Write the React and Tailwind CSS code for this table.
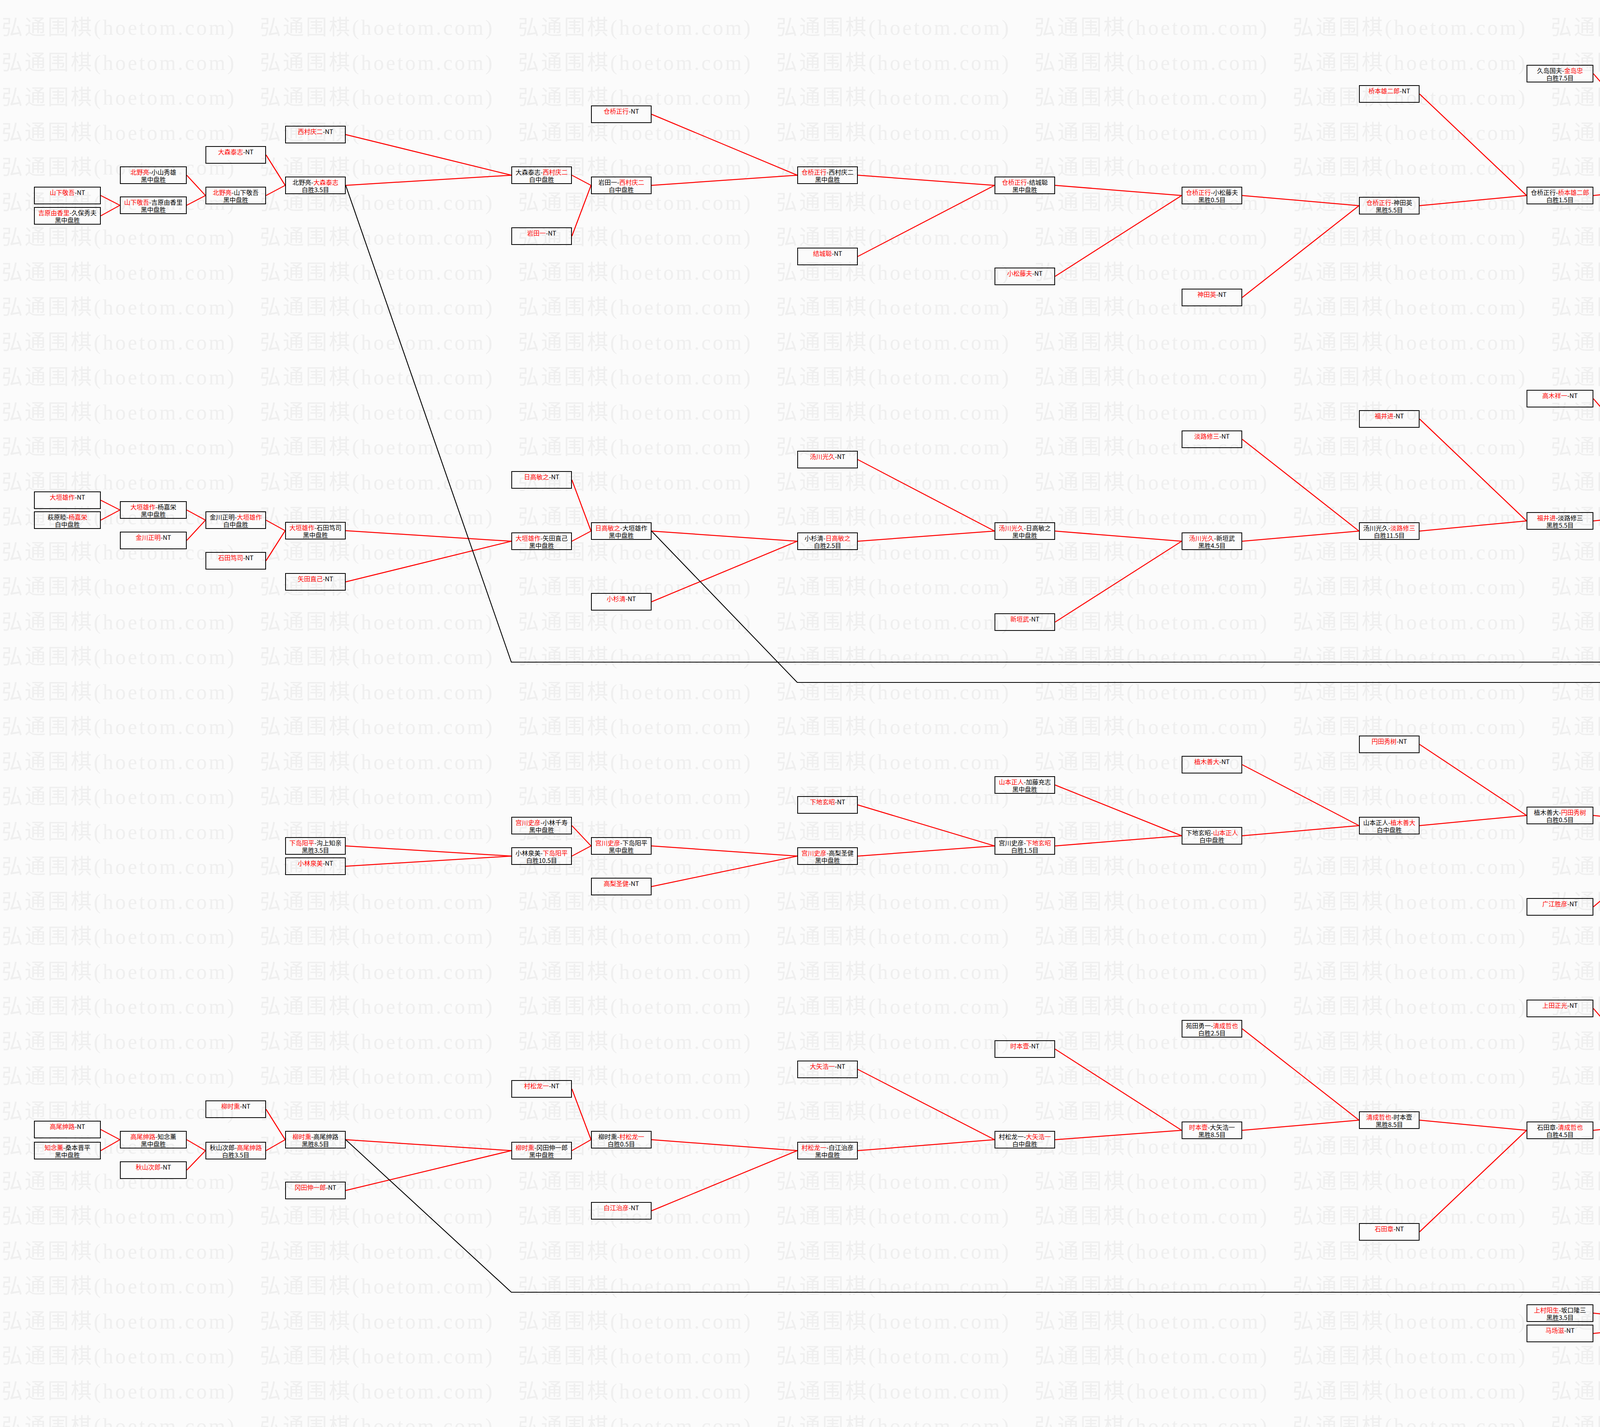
import React from 'react';

// column x / width on the bracket canvas
const COLS = [
  [87, 171], [307, 171], [526, 155], [730, 155], [1309, 155], [1513, 155],
  [2041, 155], [2546, 155], [3025, 155], [3479, 155], [3908, 171], [4327, 155],
  [4707, 155], [5061, 155], [5390, 155], [5694, 155], [5973, 171], [6193, 155],
  [6396, 171],
];

const BOX_H = 45;

// [id, col, top, first line (*red*), second line]
const NODES = [
  // upper half
  ['a1', 0, 478, '*山下敬吾*-NT'],
  ['a2', 0, 530, '*吉原由香里*-久保秀夫', '黑中盘胜'],
  ['a3', 1, 426, '*北野亮*-小山秀雄', '黑中盘胜'],
  ['a4', 1, 503, '*山下敬吾*-吉原由香里', '黑中盘胜'],
  ['a5', 2, 374, '*大森泰志*-NT'],
  ['a6', 2, 478, '*北野亮*-山下敬吾', '黑中盘胜'],
  ['a7', 3, 322, '*西村庆二*-NT'],
  ['a8', 3, 452, '北野亮-*大森泰志*', '白胜3.5目'],
  ['a9', 4, 426, '大森泰志-*西村庆二*', '白中盘胜'],
  ['a10', 4, 582, '*岩田一*-NT'],
  ['a11', 5, 270, '*仓桥正行*-NT'],
  ['a12', 5, 452, '岩田一-*西村庆二*', '白中盘胜'],
  ['a13', 6, 426, '*仓桥正行*-西村庆二', '黑中盘胜'],
  ['a14', 6, 634, '*结城聪*-NT'],
  ['a15', 7, 452, '*仓桥正行*-结城聪', '黑中盘胜'],
  ['a16', 7, 685, '*小松藤夫*-NT'],
  ['a17', 8, 478, '*仓桥正行*-小松藤夫', '黑胜0.5目'],
  ['a18', 8, 739, '*神田英*-NT'],
  ['a19', 9, 218, '*桥本雄二郎*-NT'],
  ['a20', 9, 504, '*仓桥正行*-神田英', '黑胜5.5目'],
  ['a21', 10, 166, '久岛国夫-*金岛忠*', '白胜7.5目'],
  ['a22', 10, 478, '仓桥正行-*桥本雄二郎*', '白胜1.5目'],
  ['a23', 11, 114, '黑泽忠尚-*本田邦久*', '白胜0.5目'],
  ['a24', 11, 452, '桥本雄二郎-*金岛忠*', '白胜1.5目'],
  ['a25', 12, 426, '*本田邦久*-金岛忠', '黑中盘胜'],
  ['a26', 12, 790, '*桥本昌二*-NT'],
  ['a27', 13, 63, '*小林觉*-NT'],
  ['a28', 13, 452, '桥本昌二-*本田邦久*', '白胜11.5目'],
  ['a29', 14, 10, '*山田规三生*-NT'],
  ['a30', 14, 426, '*小林觉*-本田邦久', '黑胜11.5目'],
  ['a31', 15, 400, '*山田规三生*-小林觉', '黑胜4.5目'],

  ['b1', 0, 1258, '*大垣雄作*-NT'],
  ['b2', 0, 1309, '萩原睦-*杨嘉栄*', '白中盘胜'],
  ['b3', 1, 1283, '*大垣雄作*-杨嘉栄', '黑中盘胜'],
  ['b4', 1, 1361, '*金川正明*-NT'],
  ['b5', 2, 1309, '金川正明-*大垣雄作*', '白中盘胜'],
  ['b6', 2, 1413, '*石田笃司*-NT'],
  ['b7', 3, 1336, '*大垣雄作*-石田笃司', '黑中盘胜'],
  ['b8', 3, 1467, '*矢田直己*-NT'],
  ['b9', 4, 1206, '*日高敏之*-NT'],
  ['b10', 4, 1363, '*大垣雄作*-矢田直己', '黑中盘胜'],
  ['b11', 5, 1337, '*日高敏之*-大垣雄作', '黑中盘胜'],
  ['b12', 5, 1518, '*小杉清*-NT'],
  ['b13', 6, 1154, '*汤川光久*-NT'],
  ['b14', 6, 1363, '小杉清-*日高敏之*', '白胜2.5目'],
  ['b15', 7, 1337, '*汤川光久*-日高敏之', '黑中盘胜'],
  ['b16', 7, 1570, '*新垣武*-NT'],
  ['b17', 8, 1102, '*淡路修三*-NT'],
  ['b18', 8, 1363, '*汤川光久*-新垣武', '黑胜4.5目'],
  ['b19', 9, 1050, '*福井进*-NT'],
  ['b20', 9, 1337, '汤川光久-*淡路修三*', '白胜11.5目'],
  ['b21', 10, 998, '*高木祥一*-NT'],
  ['b22', 10, 1311, '*福井进*-淡路修三', '黑胜5.5目'],
  ['b23', 11, 946, '宫本义久-*石榑郁郎*', '白胜7.5目'],
  ['b24', 11, 1285, '*高木祥一*-福井进', '黑中盘胜'],
  ['b25', 12, 894, '*杉内雅男*-NT'],
  ['b26', 12, 1259, '*石榑郁郎*-高木祥一', '黑胜1.5目'],
  ['b27', 13, 842, '*小林光一*-NT'],
  ['b28', 13, 1233, '石榑郁郎-*杉内雅男*', '白胜1.5目'],
  ['b29', 14, 1207, '杉内雅男-*小林光一*', '白中盘胜'],
  ['b30', 14, 1622, '*赵治勋*-NT'],
  ['b31', 15, 1233, '赵治勋-*小林光一*', '白中盘胜'],

  ['c1', 16, 816, '小林光一-*山田规三生*', '白胜2.5目'],
  ['c2', 17, 868, '北野亮-*山田规三生*', '白中盘胜'],
  ['c3', 16, 1700, '*北野亮*-大垣雄作', '黑胜0.5目'],
  ['c4', 18, 1804, '森田道博-*山田规三生*', '白中盘胜'],
  ['c5', 14, 1778, '*上村阳生*-王铭琬', '黑胜0.5目'],

  // lower half
  ['d1', 3, 2143, '*下岛阳平*-沟上知亲', '黑胜3.5目'],
  ['d2', 3, 2195, '*小林泉美*-NT'],
  ['d3', 4, 2091, '*宫川史彦*-小林千寿', '黑中盘胜'],
  ['d4', 4, 2169, '小林泉美-*下岛阳平*', '白胜10.5目'],
  ['d5', 5, 2143, '*宫川史彦*-下岛阳平', '黑中盘胜'],
  ['d6', 5, 2247, '*高梨圣健*-NT'],
  ['d7', 6, 2038, '*下地玄昭*-NT'],
  ['d8', 6, 2169, '*宫川史彦*-高梨圣健', '黑中盘胜'],
  ['d9', 7, 1987, '*山本正人*-加藤充志', '黑中盘胜'],
  ['d10', 7, 2143, '宫川史彦-*下地玄昭*', '白胜1.5目'],
  ['d11', 8, 1935, '*植木善大*-NT'],
  ['d12', 8, 2117, '下地玄昭-*山本正人*', '白中盘胜'],
  ['d13', 9, 1883, '*円田秀树*-NT'],
  ['d14', 9, 2091, '山本正人-*植木善大*', '白中盘胜'],
  ['d15', 10, 2065, '植木善大-*円田秀树*', '白胜0.5目'],
  ['d16', 10, 2299, '*广江胜彦*-NT'],
  ['d17', 11, 1831, '*森田道博*-NT'],
  ['d18', 11, 2091, '广江胜彦-*円田秀树*', '白中盘胜'],
  ['d19', 12, 2065, '*森田道博*-円田秀树', '黑中盘胜'],
  ['d20', 12, 2351, '*大渊盛人*-NT'],
  ['d21', 13, 2091, '*森田道博*-大渊盛人', '黑中盘胜'],
  ['d22', 13, 2403, '*郡寿男*-NT'],
  ['d23', 13, 2455, '*加藤正夫*-NT'],
  ['d24', 14, 2117, '郡寿男-*森田道博*', '白胜2.5目'],
  ['d25', 15, 2091, '森田道博-*王铭琬*', '白胜6.5目'],
  ['d26', 16, 2505, '*森田道博*-加藤正夫', '黑胜14.5目'],
  ['d27', 17, 2689, '*森田道博*-高尾绅路', '黑中盘胜'],

  ['e1', 0, 2869, '*高尾绅路*-NT'],
  ['e2', 0, 2923, '*知念薰*-桑本晋平', '黑中盘胜'],
  ['e3', 1, 2895, '*高尾绅路*-知念薰', '黑中盘胜'],
  ['e4', 1, 2973, '*秋山次郎*-NT'],
  ['e5', 2, 2817, '*柳时熏*-NT'],
  ['e6', 2, 2923, '秋山次郎-*高尾绅路*', '白胜3.5目'],
  ['e7', 3, 2895, '*柳时熏*-高尾绅路', '黑胜8.5目'],
  ['e8', 3, 3025, '*冈田伸一郎*-NT'],
  ['e9', 4, 2765, '*村松龙一*-NT'],
  ['e10', 4, 2923, '*柳时熏*-冈田伸一郎', '黑中盘胜'],
  ['e11', 5, 2895, '柳时熏-*村松龙一*', '白胜0.5目'],
  ['e12', 5, 3077, '*白江治彦*-NT'],
  ['e13', 6, 2715, '*大矢浩一*-NT'],
  ['e14', 6, 2923, '*村松龙一*-白江治彦', '黑中盘胜'],
  ['e15', 7, 2663, '*时本壹*-NT'],
  ['e16', 7, 2895, '村松龙一-*大矢浩一*', '白中盘胜'],
  ['e17', 8, 2611, '苑田勇一-*清成哲也*', '白胜2.5目'],
  ['e18', 8, 2871, '*时本壹*-大矢浩一', '黑胜8.5目'],
  ['e19', 9, 2845, '*清成哲也*-时本壹', '黑胜8.5目'],
  ['e20', 9, 3131, '*石田章*-NT'],
  ['e21', 10, 2559, '*上田正光*-NT'],
  ['e22', 10, 2871, '石田章-*清成哲也*', '白胜4.5目'],
  ['e23', 11, 2505, '石井正-*春山勇*', '白中盘胜'],
  ['e24', 11, 2845, '*上田正光*-清成哲也', '黑胜11.5目'],
  ['e25', 12, 2819, '*春山勇*-上田正光', '黑中盘胜'],
  ['e26', 12, 3183, '*曲励起*-NT'],
  ['e27', 13, 2845, '*春山勇*-曲励起', '黑中盘胜'],
  ['e28', 14, 2819, '*加藤正夫*-春山勇', '黑中盘胜'],
  ['e29', 14, 3235, '*彦坂直人*-NT'],
  ['e30', 15, 2845, '*加藤正夫*-彦坂直人', '黑胜2.5目'],

  ['f1', 10, 3339, '*上村阳生*-坂口隆三', '黑胜3.5目'],
  ['f2', 10, 3391, '*马场滋*-NT'],
  ['f3', 11, 3365, '*上村阳生*-马场滋', '黑中盘胜'],
  ['f4', 11, 3443, '*早濑弘*-NT'],
  ['f5', 12, 3391, '*上村阳生*-早濑弘', '黑中盘胜'],
  ['f6', 12, 3495, '*羽根泰正*-NT'],
  ['f7', 13, 3417, '*上村阳生*-羽根泰正', '黑中盘胜'],
  ['f8', 13, 3547, '*工藤纪夫*-NT'],
  ['f9', 14, 3443, '工藤纪夫-*上村阳生*', '白胜6.5目'],
  ['f10', 14, 3599, '*大竹英雄*-NT'],
  ['f11', 15, 3469, '*上村阳生*-大竹英雄', '黑中盘胜'],
  ['f12', 16, 3443, '*高尾绅路*-上村阳生', '黑中盘胜'],
];

const byId = Object.fromEntries(NODES.map((n) => [n[0], n]));

// winner paths (red), child -> parent
const EDGES = [
  'a1 a4', 'a2 a4', 'a3 a6', 'a4 a6', 'a5 a8', 'a6 a8', 'a7 a9', 'a8 a9',
  'a9 a12', 'a10 a12', 'a11 a13', 'a12 a13', 'a13 a15', 'a14 a15', 'a15 a17',
  'a16 a17', 'a17 a20', 'a18 a20', 'a19 a22', 'a20 a22', 'a21 a24', 'a22 a24',
  'a23 a25', 'a24 a25', 'a25 a28', 'a26 a28', 'a27 a30', 'a28 a30', 'a29 a31',
  'a30 a31',
  'b1 b3', 'b2 b3', 'b3 b5', 'b4 b5', 'b5 b7', 'b6 b7', 'b7 b10', 'b8 b10',
  'b9 b11', 'b10 b11', 'b11 b14', 'b12 b14', 'b13 b15', 'b14 b15', 'b15 b18',
  'b16 b18', 'b17 b20', 'b18 b20', 'b19 b22', 'b20 b22', 'b21 b24', 'b22 b24',
  'b23 b26', 'b24 b26', 'b25 b28', 'b26 b28', 'b27 b29', 'b28 b29', 'b29 b31',
  'b30 b31',
  'a31 c1', 'b31 c1', 'c1 c2', 'c3 c2', 'c2 c4', 'd27 c4',
  'd1 d4', 'd2 d4', 'd3 d5', 'd4 d5', 'd5 d8', 'd6 d8', 'd7 d10', 'd8 d10',
  'd9 d12', 'd10 d12', 'd11 d14', 'd12 d14', 'd13 d15', 'd14 d15', 'd15 d18',
  'd16 d18', 'd17 d19', 'd18 d19', 'd19 d21', 'd20 d21', 'd21 d24', 'd22 d24',
  'd24 d25', 'd26 d27', 'f12 d27',
  'e1 e3', 'e2 e3', 'e3 e6', 'e4 e6', 'e5 e7', 'e6 e7', 'e7 e10', 'e8 e10',
  'e9 e11', 'e10 e11', 'e11 e14', 'e12 e14', 'e13 e16', 'e14 e16', 'e15 e18',
  'e16 e18', 'e17 e19', 'e18 e19', 'e19 e22', 'e20 e22', 'e21 e24', 'e22 e24',
  'e23 e25', 'e24 e25', 'e25 e27', 'e26 e27', 'e27 e28', 'd23 e28', 'e28 e30',
  'e29 e30', 'e30 d26',
  'f1 f3', 'f2 f3', 'f3 f5', 'f4 f5', 'f5 f7', 'f6 f7', 'f7 f9', 'f8 f9',
  'f9 f11', 'f10 f11', 'f11 f12',
];

const rightMid = (id) => {
  const [, col, top] = byId[id];
  return [COLS[col][0] + COLS[col][1], top + BOX_H / 2];
};
const leftMid = (id) => {
  const [, col, top] = byId[id];
  return [COLS[col][0], top + BOX_H / 2];
};

// loser-bracket routes (black)
const BLACK = [
  [rightMid('a8'), [1309, 1695], [5849, 1695], leftMid('c3')],
  [rightMid('b11'), [2041, 1747], [5849, 1747], leftMid('c3')],
  [rightMid('e7'), [1309, 3308], [5849, 3308], leftMid('f12')],
  [rightMid('c5'), leftMid('d25')],
  [rightMid('d25'), leftMid('d26')],
];

function Label({ text }) {
  return text.split('*').map((part, i) =>
    i % 2 ? (
      <span key={i} className="text-[#ff0000]">{part}</span>
    ) : (
      <span key={i}>{part}</span>
    )
  );
}

function Box({ node }) {
  const [, col, top, line1, line2] = node;
  const [x, w] = COLS[col];
  return (
    <div
      className="absolute h-[45px] border-2 border-black pt-[3px] text-center text-[16px] leading-[19px] whitespace-nowrap text-black"
      style={{ left: x, top, width: w }}
    >
      <div>
        <Label text={line1} />
      </div>
      {line2 && <div>{line2}</div>}
    </div>
  );
}

const WM_ROWS = Array.from({ length: 41 });
const WM_COLS = Array.from({ length: 10 });

export default function App() {
  return (
    <div className="relative w-[6578px] h-[3653px] overflow-hidden bg-[#fbfbfb] font-['Noto_Sans_CJK_SC','Noto_Sans_CJK_JP',sans-serif]">
      {/* watermark */}
      <div className="absolute left-[4px] top-[27px] grid grid-cols-[repeat(10,661px)] auto-rows-[89.5px] select-none">
        {WM_ROWS.map((_, r) =>
          WM_COLS.map((_, c) => (
            <span
              key={`${r}-${c}`}
              className="whitespace-nowrap text-[54px] leading-[89.5px] tracking-[5px] text-[#efefef] font-['Liberation_Serif','Noto_Sans_CJK_SC',serif]"
            >
              弘通围棋(hoetom.com)
            </span>
          ))
        )}
      </div>

      {/* connectors */}
      <svg className="absolute inset-0" width="6578" height="3653">
        {EDGES.map((e) => {
          const [a, b] = e.split(' ');
          const [x1, y1] = rightMid(a);
          const [x2, y2] = leftMid(b);
          return (
            <line key={e} x1={x1} y1={y1} x2={x2} y2={y2} stroke="#ff0000" strokeWidth="2.5" />
          );
        })}
        {BLACK.map((pts, i) => (
          <polyline
            key={i}
            points={pts.map((p) => p.join(',')).join(' ')}
            fill="none"
            stroke="#000"
            strokeWidth="2.2"
          />
        ))}
      </svg>

      {/* match boxes */}
      {NODES.map((n) => (
        <Box key={n[0]} node={n} />
      ))}
    </div>
  );
}
